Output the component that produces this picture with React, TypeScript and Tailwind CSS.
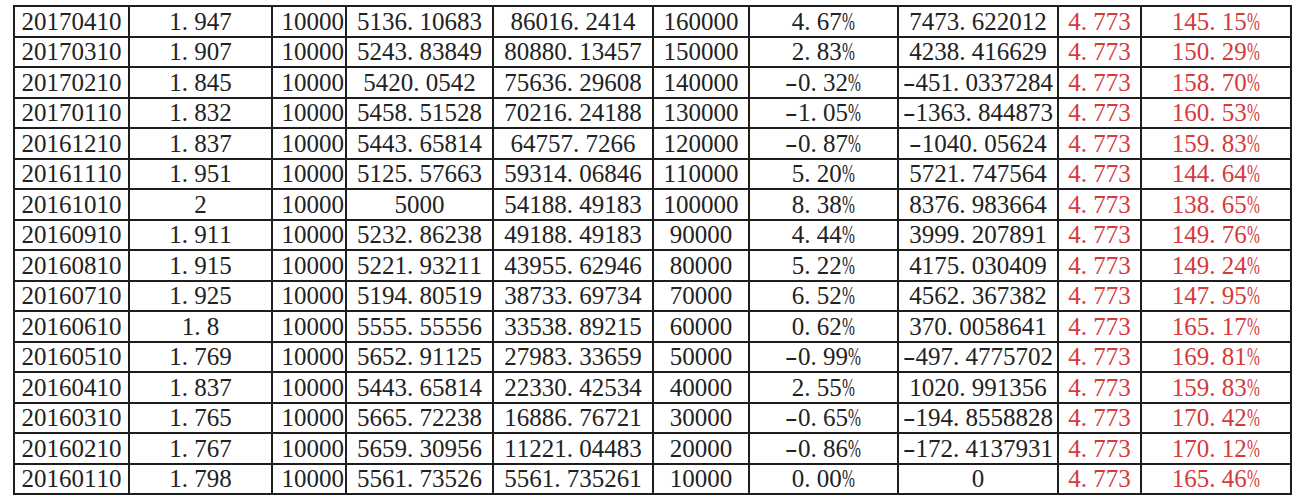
import React from 'react';

type Row = string[];

const rows: Row[] = [
  ['20170410', '1.947', '10000', '5136.10683', '86016.2414', '160000', '4.67%', '7473.622012', '4.773', '145.15%'],
  ['20170310', '1.907', '10000', '5243.83849', '80880.13457', '150000', '2.83%', '4238.416629', '4.773', '150.29%'],
  ['20170210', '1.845', '10000', '5420.0542', '75636.29608', '140000', '-0.32%', '-451.0337284', '4.773', '158.70%'],
  ['20170110', '1.832', '10000', '5458.51528', '70216.24188', '130000', '-1.05%', '-1363.844873', '4.773', '160.53%'],
  ['20161210', '1.837', '10000', '5443.65814', '64757.7266', '120000', '-0.87%', '-1040.05624', '4.773', '159.83%'],
  ['20161110', '1.951', '10000', '5125.57663', '59314.06846', '110000', '5.20%', '5721.747564', '4.773', '144.64%'],
  ['20161010', '2', '10000', '5000', '54188.49183', '100000', '8.38%', '8376.983664', '4.773', '138.65%'],
  ['20160910', '1.911', '10000', '5232.86238', '49188.49183', '90000', '4.44%', '3999.207891', '4.773', '149.76%'],
  ['20160810', '1.915', '10000', '5221.93211', '43955.62946', '80000', '5.22%', '4175.030409', '4.773', '149.24%'],
  ['20160710', '1.925', '10000', '5194.80519', '38733.69734', '70000', '6.52%', '4562.367382', '4.773', '147.95%'],
  ['20160610', '1.8', '10000', '5555.55556', '33538.89215', '60000', '0.62%', '370.0058641', '4.773', '165.17%'],
  ['20160510', '1.769', '10000', '5652.91125', '27983.33659', '50000', '-0.99%', '-497.4775702', '4.773', '169.81%'],
  ['20160410', '1.837', '10000', '5443.65814', '22330.42534', '40000', '2.55%', '1020.991356', '4.773', '159.83%'],
  ['20160310', '1.765', '10000', '5665.72238', '16886.76721', '30000', '-0.65%', '-194.8558828', '4.773', '170.42%'],
  ['20160210', '1.767', '10000', '5659.30956', '11221.04483', '20000', '-0.86%', '-172.4137931', '4.773', '170.12%'],
  ['20160110', '1.798', '10000', '5561.73526', '5561.735261', '10000', '0.00%', '0', '4.773', '165.46%'],
];

// mimic the half-width cells of the spreadsheet font
const Num = ({ value }: { value: string }) => (
  <>
    {value.split('').map((ch, i) => {
      if (ch === '.') return <span key={i} className="tracking-[0.25em]">.</span>;
      if (ch === '-')
        return (
          <span key={i} className="inline-block w-[0.5em] text-center scale-x-[1.5]">
            -
          </span>
        );
      if (ch === '%')
        return (
          <span key={i} className="inline-block w-[0.55em] origin-left scale-x-[0.62]">
            %
          </span>
        );
      return <span key={i}>{ch}</span>;
    })}
  </>
);

export default function App() {
  return (
    <div className="h-[500px] w-[1300px] bg-white pl-[13px] pt-[5px] font-['Liberation_Serif',serif]">
      <div className="grid h-[490px] w-[1279px] auto-rows-fr grid-cols-[113px_141px_72px_145px_158px_94px_147px_158px_81px_148px] gap-[2px] bg-[#1e1e1e] p-[2px] text-[25px] leading-none">
        {rows.map((row, r) =>
          row.map((cell, c) => (
            <div
              key={`${r}-${c}`}
              className={`flex items-center bg-white whitespace-nowrap ${
                c === 2 ? 'justify-end pr-[1px]' : 'justify-center'
              } ${c >= 8 ? 'text-[#d63a3a]' : 'text-[#222]'}`}
            >
              <Num value={cell} />
            </div>
          ))
        )}
      </div>
    </div>
  );
}
